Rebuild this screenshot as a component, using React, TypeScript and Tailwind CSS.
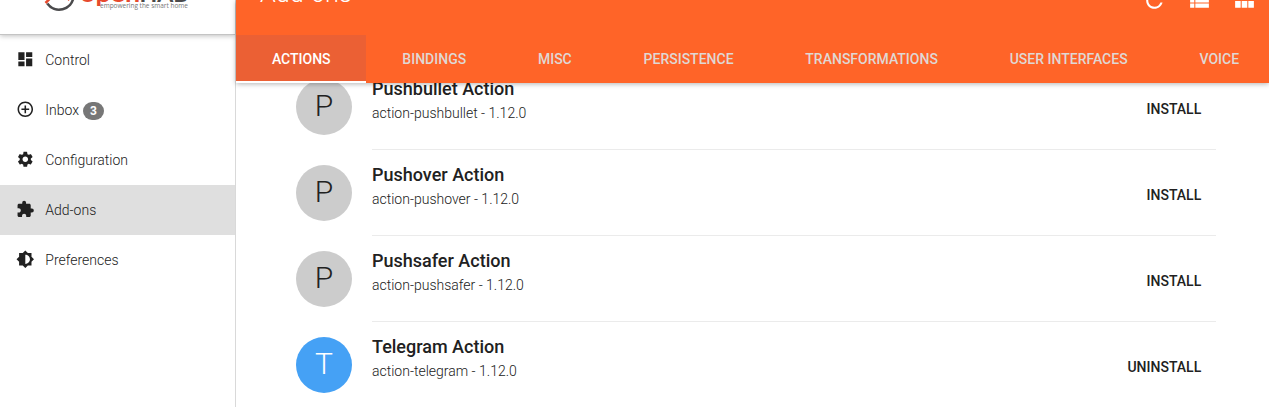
import React from "react";
import {
  MdAddCircleOutline,
  MdBrightness6,
  MdDashboard,
  MdExtension,
  MdRefresh,
  MdSettings,
  MdViewList,
  MdViewModule
} from "react-icons/md";

const menu = [
  { label: "Control", icon: MdDashboard },
  { label: "Inbox", icon: MdAddCircleOutline, badge: 3 },
  { label: "Configuration", icon: MdSettings },
  { label: "Add-ons", icon: MdExtension, active: true },
  { label: "Preferences", icon: MdBrightness6 }
];

const tabs = [
  "Actions",
  "Bindings",
  "Misc",
  "Persistence",
  "Transformations",
  "User Interfaces",
  "Voice"
];

const addons = [
  { name: "Pushbullet Action", id: "action-pushbullet", installed: false },
  { name: "Pushover Action", id: "action-pushover", installed: false },
  { name: "Pushsafer Action", id: "action-pushsafer", installed: false },
  { name: "Telegram Action", id: "action-telegram", installed: true }
];

function Logo() {
  return (
    <svg className="block" width="235" height="34" viewBox="0 0 235 34">
      <path d="M45.5 3L59 -10.5L69.5 0" fill="none" stroke="#e64a2e" strokeWidth="2.5" />
      <path d="M47.3 3.5A14.5 14.5 0 0 0 73.5 -3" fill="none" stroke="#4a4a4c" strokeWidth="2.6" />
      <text x="80" y="1.8" fontSize="25" fontWeight="700" fontFamily="Lato, sans-serif" fill="#e64a2e" textLength="60" lengthAdjust="spacingAndGlyphs">
        open
      </text>
      <text x="139.5" y="1.8" fontSize="25" fontWeight="700" fontFamily="Lato, sans-serif" fill="#4a4a4c" textLength="49" lengthAdjust="spacingAndGlyphs">
        HAB
      </text>
      <text x="100" y="7.6" fontSize="7" fontFamily="Open Sans, sans-serif" fill="#777777" textLength="88" lengthAdjust="spacingAndGlyphs">
        empowering the smart home
      </text>
    </svg>
  );
}

function Sidebar() {
  return (
    <aside className="w-[236px] shrink-0 border-r border-[#d9d9d9] bg-white">
      <div className="h-[35px] border-b border-[#c4c4c4] shadow-[0_1px_5px_rgba(0,0,0,0.25)]">
        <Logo />
      </div>
      <ul>
        {menu.map(({ label, icon: Icon, badge, active }) => (
          <li
            key={label}
            className={`flex h-[50px] items-center pl-[15.7px] text-sm font-light text-[#212121] ${
              active ? "bg-[#dfdfdf]" : ""
            }`}
          >
            <Icon className="mr-[11px] mb-[2px] size-[18.6px]" />
            <span>{label}</span>
            {badge && (
              <span className="mt-[2px] ml-1 flex h-[18px] w-[21px] items-center justify-center rounded-full bg-[#777777] text-xs font-bold text-white">
                {badge}
              </span>
            )}
          </li>
        ))}
      </ul>
    </aside>
  );
}

function Header() {
  return (
    <header className="relative z-10 h-[83px] bg-[#ff6428] text-white shadow-[0_1px_5px_rgba(0,0,0,0.3)]">
      <div className="flex h-[35px] items-start justify-between overflow-hidden pl-6">
        <h1 className="-mt-[20px] text-[25.2px] leading-7 font-light">Add-ons</h1>
        <div className="-mt-[12px] flex gap-5 pr-3">
          <MdRefresh className="size-[25px]" />
          <MdViewList className="size-[25px]" />
          <MdViewModule className="size-[25px]" />
        </div>
      </div>
      <nav className="flex h-12 overflow-hidden">
        {tabs.map((tab, i) => (
          <button
            key={tab}
            className={`shrink-0 px-[35.9px] text-sm font-medium uppercase ${
              i === 0
                ? "border-b-2 border-white bg-[#eb6034] pt-[2px]"
                : "text-[#e0d8d4]"
            }`}
          >
            {tab}
          </button>
        ))}
      </nav>
    </header>
  );
}

function App() {
  return (
    <div className="flex h-[407px] overflow-hidden bg-white font-['Roboto',sans-serif] text-[#212121]">
      <Sidebar />
      <main className="min-w-0 flex-1">
        <Header />
        <div className="-mt-[19px] pr-[53px] pl-[60px]">
          {addons.map(addon => (
            <div key={addon.id} className="flex h-[86px]">
              <div
                className={`mt-[15px] mr-5 flex size-14 shrink-0 items-center justify-center rounded-full pb-1 text-[30px] font-light ${
                  addon.installed ? "bg-[#45a1f5] text-white" : "bg-[#cccccc]"
                }`}
              >
                {addon.name[0]}
              </div>
              <div className="flex flex-1 justify-between border-b border-[#ebebeb]">
                <div className="pt-[13px]">
                  <h2 className="text-lg leading-6 font-medium">{addon.name}</h2>
                  <p className="text-sm leading-6 font-light">{addon.id} - 1.12.0</p>
                </div>
                <button className="mt-[35px] mr-[14.8px] h-5 text-sm font-medium uppercase">
                  {addon.installed ? "Uninstall" : "Install"}
                </button>
              </div>
            </div>
          ))}
        </div>
      </main>
    </div>
  );
}

export default App;
